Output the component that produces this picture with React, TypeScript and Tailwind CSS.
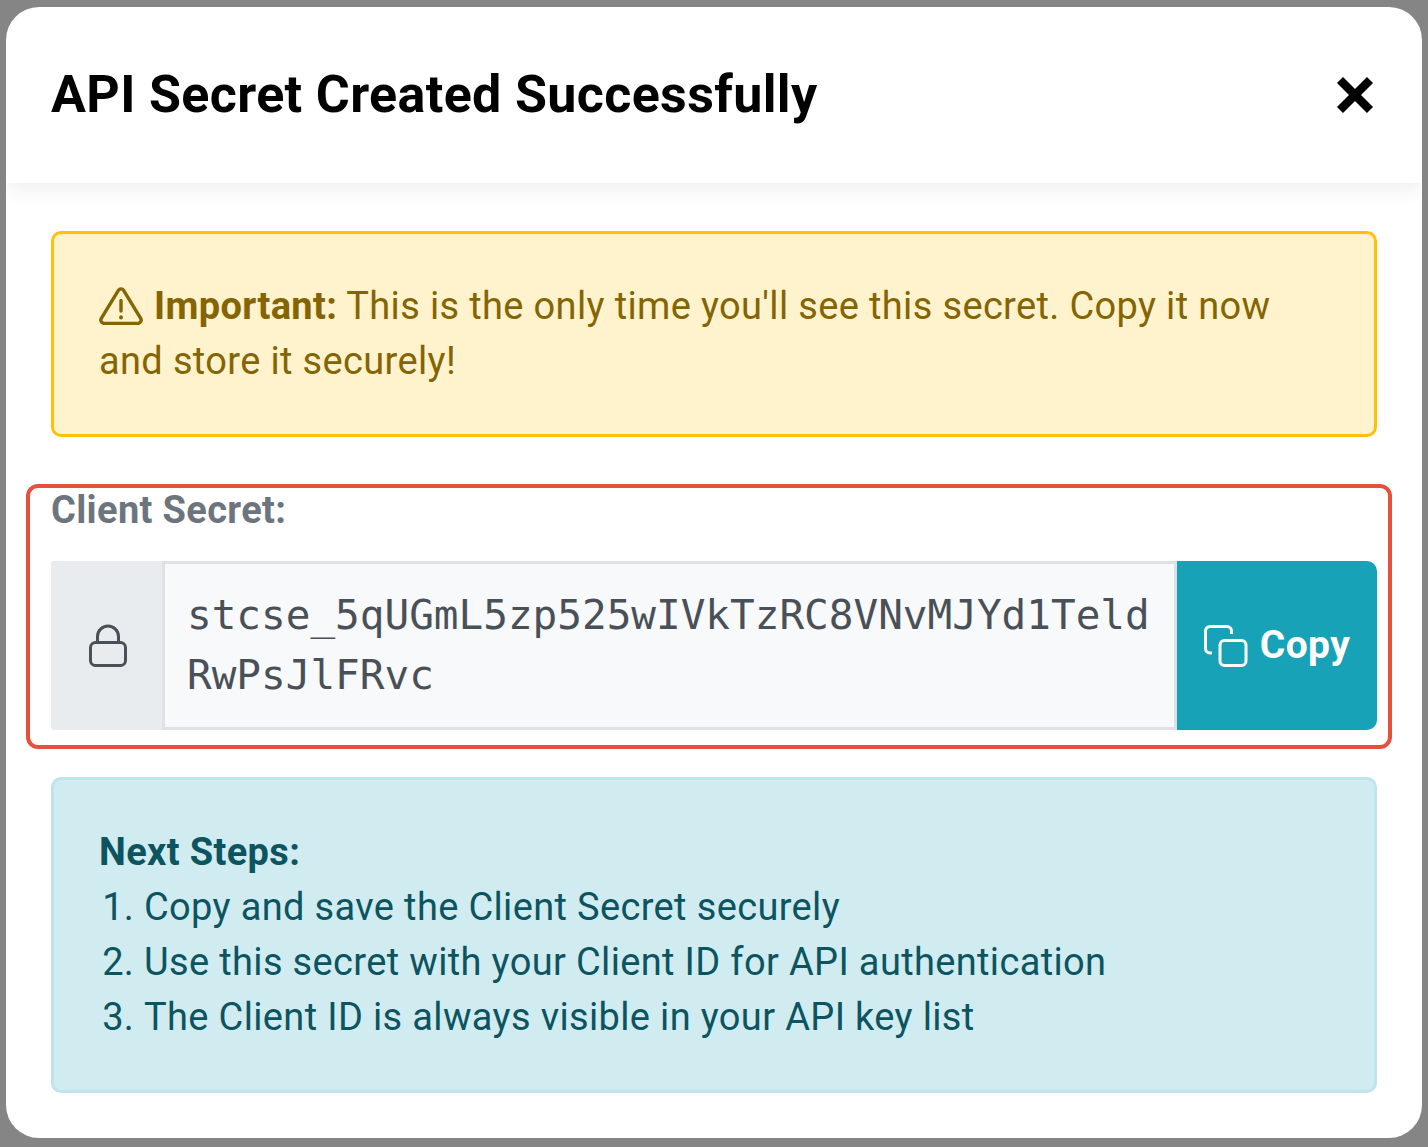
import React from "react";

const WarningIcon: React.FC = () => (
  <svg width="44" height="38" viewBox="0 0 44 38" fill="none" stroke="#856404" strokeWidth="3.400" strokeLinecap="round" strokeLinejoin="round" className="mr-[11px] inline-block align-[-6px]">
    <path d="M19.400 3.400 2.300 31.400c-1.300 2.200.3 5 2.900 5h33.600c2.600 0 4.200-2.800 2.900-5L24.600 3.400c-1.200-2-4-2-5.200 0Z" />
    <path d="M22 13.500v10.500" />
    <path d="M22 30.200v.3" strokeWidth="3.800" />
  </svg>
);

const LockIcon: React.FC = () => (
  <svg width="40" height="44" viewBox="0 0 40 44" fill="none" stroke="#495057" strokeWidth="3">
    <rect x="2.500" y="18.500" width="35" height="23" rx="5" />
    <path d="M9.500 18.500v-6a10.500 10.500 0 0 1 21 0v6" />
  </svg>
);

const CopyIcon: React.FC = () => (
  <svg width="44" height="42" viewBox="0 0 44 42" fill="none" stroke="white" strokeWidth="3" className="shrink-0">
    <rect x="16" y="15.500" width="26" height="25" rx="4.500" />
    <path d="M8 28H6a4.500 4.500 0 0 1-4.500-4.500V6A4.500 4.500 0 0 1 6 1.500h17A4.500 4.500 0 0 1 27.500 6v3" />
  </svg>
);

const CloseIcon: React.FC = () => (
  <svg width="38" height="38" viewBox="0 0 38 38" fill="none" stroke="black" strokeWidth="8.500">
    <path d="M4 4l30 30M34 4 4 34" />
  </svg>
);

const App: React.FC = () => {
  return (
    <div className="h-[1147px] w-[1428px] overflow-hidden bg-[#858585] pl-[6px] pt-[7px] font-['Roboto',sans-serif]">
      <div className="relative h-[1131px] w-[1416px] overflow-hidden rounded-[33px] bg-white">
        <div className="relative flex h-[176px] items-center justify-between pb-[1px] pl-[45px] pr-[48px] shadow-[0_6px_20px_rgba(0,0,0,0.07)]">
          <h1 className="text-[52px] font-bold leading-[60px] tracking-[0.35px] text-black">API Secret Created Successfully</h1>
          <CloseIcon />
        </div>

        <div className="px-[45px] pt-[48px]">
          <div className="h-[206px] rounded-[10px] border-[3px] border-[#ffc107] bg-[#fff3cd] px-[45px] pt-[45px] text-[38px] leading-[55px] tracking-[0.35px] text-[#856404]">
            <WarningIcon />
            <strong className="font-bold">Important:</strong> This is the only time you'll see this secret. Copy it now and store it securely!
          </div>

          <div className="mt-[51px] text-[38px] font-bold leading-[44px] tracking-[0.35px] text-[#6c757d]">Client Secret:</div>

          <div className="mt-[29px] flex h-[169px]">
            <div className="flex w-[111px] shrink-0 items-center justify-center rounded-l-[3px] bg-[#e9ecef] pl-[2px]">
              <LockIcon />
            </div>
            <div className="flex-1 border-[3px] border-[#dee2e6] bg-[#f8f9fa] pl-[22px] pr-[20px] pt-[21px] font-['DejaVu_Sans_Mono',monospace] text-[41px] leading-[60px] text-[#495057] break-all">
              stcse_5qUGmL5zp525wIVkTzRC8VNvMJYd1TeldRwPsJlFRvc
            </div>
            <div className="flex w-[200px] shrink-0 items-center justify-center gap-[12px] rounded-r-[10px] bg-[#17a2b8] text-[39px] font-bold tracking-[0.35px] text-white">
              <CopyIcon />
              <span>Copy</span>
            </div>
          </div>

          <div className="mt-[47px] h-[316px] rounded-[10px] border-[3px] border-[#bee5eb] bg-[#d1ecf1] px-[45px] pt-[45px] text-[38px] leading-[55px] tracking-[0.35px] text-[#0c5460]">
            <strong className="block font-bold">Next Steps:</strong>
            <ol className="list-decimal pl-[45px]">
              <li>Copy and save the Client Secret securely</li>
              <li>Use this secret with your Client ID for API authentication</li>
              <li>The Client ID is always visible in your API key list</li>
            </ol>
          </div>
        </div>

        {/* annotation box drawn over the secret field */}
        <div className="absolute left-[20px] top-[477px] h-[265px] w-[1366px] rounded-[12px] border-[4px] border-[#e8503c]" />
      </div>
    </div>
  );
};

export default App;
